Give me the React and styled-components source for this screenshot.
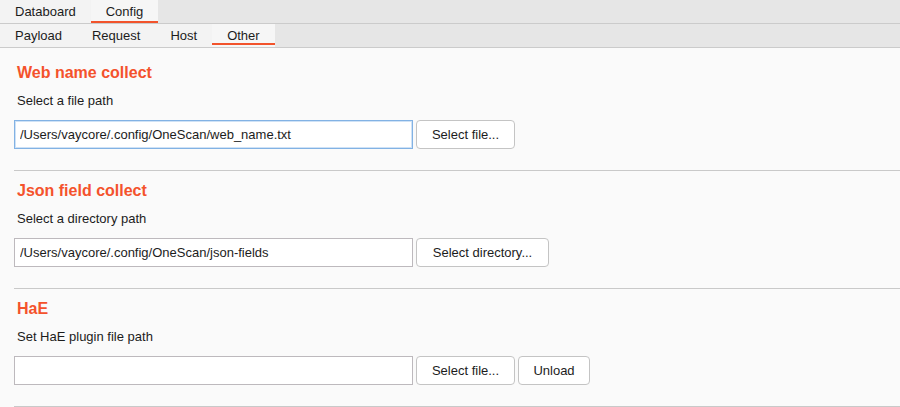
import React, { useState } from "react";
import styled, { createGlobalStyle } from "styled-components";

const Global = createGlobalStyle`
  html, body { margin: 0; padding: 0; background: #fafafa; }
  body { font-family: "Liberation Sans", Arial, sans-serif; color: #1c1c1c; }
  * { box-sizing: border-box; }
`;

const Page = styled.div`
  width: 900px;
  height: 407px;
  overflow: hidden;
  background: #fafafa;
`;

const TabBar = styled.div`
  display: flex;
  height: 24px;
  background: #e6e6e6;
  border-bottom: 1px solid #cbcbcb;
`;

const TabStrip = styled.div`
  display: flex;
  background: #f3f3f3;
`;

const Tab = styled.div`
  position: relative;
  padding: 0 15px;
  font-size: 13px;
  line-height: ${(p) => p.$h}px;
  height: ${(p) => p.$h}px;
  background: ${(p) => (p.$active ? "#f6f6f6" : "transparent")};
  cursor: default;
  &::after {
    content: "";
    position: absolute;
    left: 0;
    right: 0;
    bottom: ${(p) => p.$ub}px;
    height: 2px;
    background: ${(p) => (p.$active ? "#f2532b" : "transparent")};
  }
`;

const Content = styled.div`
  padding: 6px 0 0 14px;
`;

const Section = styled.section`
  padding: ${(p) => (p.$first ? 9 : 10)}px 0 21px 0;
  border-bottom: 1px solid #c9c9c9;
`;

const Heading = styled.h2`
  margin: 0 0 0 3px;
  font-size: 16px;
  line-height: 20px;
  font-weight: bold;
  color: #f4522c;
`;

const Label = styled.div`
  margin: 10px 0 11px 3px;
  font-size: 13px;
  line-height: 16px;
`;

const Row = styled.div`
  display: flex;
  gap: 3px;
  align-items: center;
`;

const Input = styled.input`
  width: 399px;
  height: 29px;
  padding: 0 5px;
  font-family: "Liberation Sans", Arial, sans-serif;
  font-size: 13px;
  color: #1c1c1c;
  background: #fff;
  border: 1px solid ${(p) => (p.$focus ? "#82b2e4" : "#bdb9bd")};
  box-shadow: ${(p) => (p.$focus ? "inset 0 0 0 1px #cfe2f6" : "none")};
  border-radius: 0;
  outline: none;
`;

const Button = styled.button`
  height: 29px;
  padding: 0 14px;
  font-family: "Liberation Sans", Arial, sans-serif;
  font-size: 13px;
  color: #1c1c1c;
  background: #fff;
  border: 1px solid #c4c4c4;
  border-radius: 4px;
  min-width: ${(p) => p.$min || 0}px;
`;

const sections = [
  {
    title: "Web name collect",
    label: "Select a file path",
    value: "/Users/vaycore/.config/OneScan/web_name.txt",
    focus: true,
    buttons: [{ t: "Select file...", w: 99 }],
  },
  {
    title: "Json field collect",
    label: "Select a directory path",
    value: "/Users/vaycore/.config/OneScan/json-fields",
    buttons: [{ t: "Select directory...", w: 133 }],
  },
  {
    title: "HaE",
    label: "Set HaE plugin file path",
    value: "",
    buttons: [
      { t: "Select file...", w: 99 },
      { t: "Unload", w: 72 },
    ],
  },
];

export default function App() {
  const [top] = useState("Config");
  const [sub] = useState("Other");
  return (
    <Page>
      <Global />
      <TabBar>
        <TabStrip>
          {["Databoard", "Config"].map((t) => (
            <Tab key={t} $h={23} $ub={0} $active={t === top}>
              {t}
            </Tab>
          ))}
        </TabStrip>
      </TabBar>
      <TabBar>
        <TabStrip>
          {["Payload", "Request", "Host", "Other"].map((t) => (
            <Tab key={t} $h={23} $ub={2} $active={t === sub}>
              {t}
            </Tab>
          ))}
        </TabStrip>
      </TabBar>
      <Content>
        {sections.map((s, i) => (
          <Section key={s.title} $first={i === 0}>
            <Heading>{s.title}</Heading>
            <Label>{s.label}</Label>
            <Row>
              <Input readOnly value={s.value} $focus={s.focus} />
              {s.buttons.map((b) => (
                <Button key={b.t} $min={b.w}>
                  {b.t}
                </Button>
              ))}
            </Row>
          </Section>
        ))}
      </Content>
    </Page>
  );
}
